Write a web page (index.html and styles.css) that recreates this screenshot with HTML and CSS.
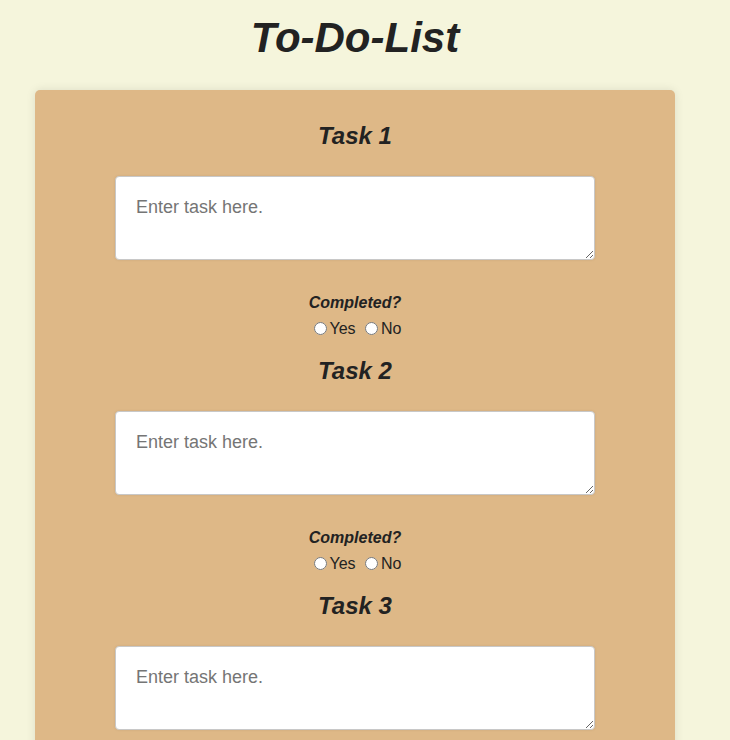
FILE: index.html
```html
<!DOCTYPE html>
<html lang="en">
<head>
<meta charset="utf-8">
<title>To-Do-List</title>
<link rel="stylesheet" href="styles.css">
</head>
<body>
<div class="page">
  <h1 class="title">To-Do-List</h1>
  <main class="card">
    <section class="task">
      <h2 class="task-title">Task 1</h2>
      <textarea class="task-input" placeholder="Enter task here."></textarea>
      <p class="completed">Completed?</p>
      <div class="choices"><input type="radio" name="t1" class="radio">Yes <input type="radio" name="t1" class="radio">No</div>
    </section>
    <section class="task">
      <h2 class="task-title">Task 2</h2>
      <textarea class="task-input" placeholder="Enter task here."></textarea>
      <p class="completed">Completed?</p>
      <div class="choices"><input type="radio" name="t2" class="radio">Yes <input type="radio" name="t2" class="radio">No</div>
    </section>
    <section class="task">
      <h2 class="task-title">Task 3</h2>
      <textarea class="task-input" placeholder="Enter task here."></textarea>
      <p class="completed">Completed?</p>
      <div class="choices"><input type="radio" name="t3" class="radio">Yes <input type="radio" name="t3" class="radio">No</div>
    </section>
  </main>
</div>
</body>
</html>
```

FILE: styles.css
```css
html, body {
  margin: 0;
  padding: 0;
  background: #f5f5dc;
}

body {
  font-family: "Liberation Sans", Arial, sans-serif;
  color: #222;
}

.page {
  width: 710px;
  padding: 14px 0 30px;
}

.title {
  margin: 0 0 28px;
  font-size: 42px;
  line-height: 48px;
  font-style: italic;
  font-weight: bold;
  text-align: center;
}

.card {
  width: 640px;
  margin: 0 auto;
  padding: 32px 0 30px;
  background: #deb887;
  border-radius: 5px;
  box-shadow: 0 0 10px rgba(0, 0, 0, 0.1);
  display: flex;
  flex-direction: column;
  align-items: center;
}

.task {
  display: flex;
  flex-direction: column;
  align-items: center;
}

.task + .task {
  margin-top: 19px;
}

.task-title {
  margin: 0;
  font-size: 24px;
  line-height: 28px;
  font-style: italic;
  font-weight: bold;
}

.task-input {
  box-sizing: border-box;
  display: block;
  width: 480px;
  height: 84px;
  margin: 26px 0 0;
  padding: 20px;
  font-family: "Liberation Sans", Arial, sans-serif;
  font-size: 18px;
  color: #222;
  background: #fff;
  border: 1px solid #c8c8c8;
  border-radius: 4px;
  box-shadow: 0 0 3px rgba(0, 0, 0, 0.08);
}

.task-input::placeholder {
  color: #757575;
}

.completed {
  margin: 34px 0 0;
  font-size: 16px;
  line-height: 18px;
  font-style: italic;
  font-weight: bold;
}

.choices {
  margin-top: 8px;
  font-size: 16px;
  line-height: 18px;
}

.radio {
  width: 13px;
  height: 13px;
  margin: 0 3px 0 5px;
  vertical-align: -1px;
}
```
